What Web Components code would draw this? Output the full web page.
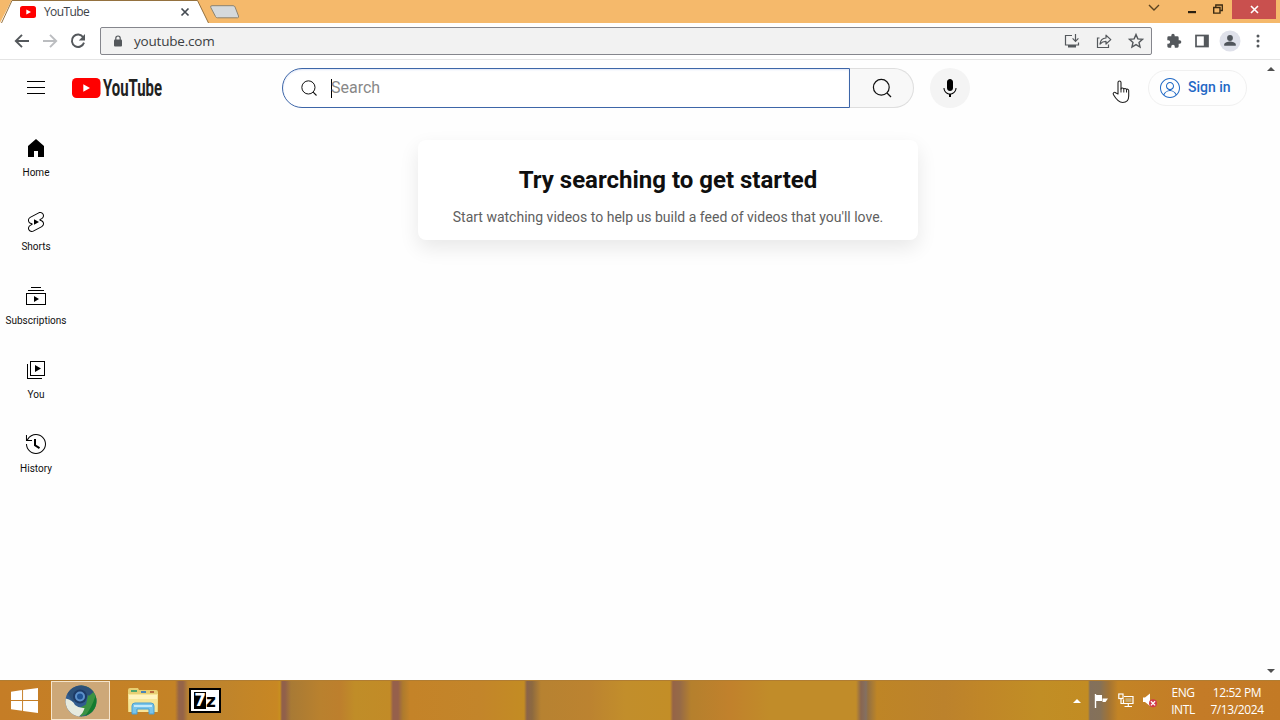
<!DOCTYPE html>
<html lang="en">
<head>
<meta charset="utf-8">
<title>YouTube</title>
<style>
body {
    margin: 0;
    width: 1280px;
    height: 720px;
    overflow: hidden;
    font-family: Roboto, "Liberation Sans", sans-serif;
    background: #fff;
}
</style>
</head>
<body>
<desk-top>
    <browser-tabs slot="tabs" label="YouTube"></browser-tabs>
    <browser-toolbar slot="toolbar" url="youtube.com"></browser-toolbar>
    <yt-masthead slot="head"></yt-masthead>
    <yt-guide slot="guide">
        <yt-guide-item icon="home">Home</yt-guide-item>
        <yt-guide-item icon="shorts">Shorts</yt-guide-item>
        <yt-guide-item icon="subs">Subscriptions</yt-guide-item>
        <yt-guide-item icon="you">You</yt-guide-item>
        <yt-guide-item icon="history">History</yt-guide-item>
    </yt-guide>
    <yt-nudge slot="content">
        <span slot="title">Try searching to get started</span>
        <span slot="text">Start watching videos to help us build a feed of videos that you'll love.</span>
    </yt-nudge>
    <task-bar slot="taskbar"></task-bar>
</desk-top>

<script>
// viewBox size and markup for every icon
const icons = {
    favicon: [16, 12, `<rect width="16" height="12" rx="2.5" fill="#f00"/><path d="M6.3 3.4v5.2L11 6z" fill="#fff"/>`],
    close: [10, 10, `<path d="M1.5 1.5l7 7M8.5 1.5l-7 7" stroke="#444b52" stroke-width="1.7"/>`],
    back: [16, 16, `<path d="M15 8H2M8 1.8L1.8 8 8 14.2" fill="none" stroke="currentColor" stroke-width="1.9"/>`],
    forward: [16, 16, `<path d="M1 8h13M8 1.8L14.2 8 8 14.2" fill="none" stroke="currentColor" stroke-width="1.9"/>`],
    reload: [16, 16, `<path d="M13.2 4.2A6.2 6.2 0 1 0 14 9.6" fill="none" stroke="currentColor" stroke-width="1.9"/><path d="M15 1v6.4H8.8z" fill="currentColor"/>`],
    lock: [10, 12, `<rect x="1" y="4.5" width="8" height="7" rx="1" fill="currentColor"/><path d="M2.8 5V3.2a2.2 2.2 0 0 1 4.4 0V5" fill="none" stroke="currentColor" stroke-width="1.2"/>`],
    install: [16, 16, `<path d="M8 2.500H1.500v9.500h13v-2.500M11.500 1v7M8.600 5.400l2.900 2.900 2.900-2.900" fill="none" stroke="currentColor" stroke-width="1.200"/><path d="M4 12h8v2.500H4z" fill="currentColor"/>`],
    share: [16, 16, `<path d="M3.500 5H1.500v9.500h11v-3" fill="none" stroke="currentColor" stroke-width="1.200"/><path d="M4 11c.4-3.800 2.400-5.800 6-6V2.200L14.800 6.600 10 11V8.400C7.400 8.400 5.500 9.300 4 11z" fill="none" stroke="currentColor" stroke-width="1.200" stroke-linejoin="round"/>`],
    star: [16, 16, `<path d="M8 1.600l1.850 4.300 4.650.4-3.500 3.100 1.050 4.600L8 11.600 3.950 14 5 9.400 1.500 6.300l4.650-.4z" fill="none" stroke="currentColor" stroke-width="1.400"/>`],
    puzzle: [24, 24, `<path fill="currentColor" d="M20.500 11H19V7a2 2 0 0 0-2-2h-4V3.500a2.500 2.500 0 0 0-5 0V5H4a2 2 0 0 0-2 2v3.800h1.500a2.700 2.700 0 0 1 0 5.400H2V20a2 2 0 0 0 2 2h3.800v-1.500a2.700 2.700 0 0 1 5.400 0V22H17a2 2 0 0 0 2-2v-4h1.500a2.500 2.500 0 0 0 0-5z"/>`],
    panel: [14, 14, `<rect x="1" y="1.500" width="12" height="11" fill="none" stroke="currentColor" stroke-width="1.700"/><path d="M8.800 1.500H13v11H8.800z" fill="currentColor"/>`],
    profile: [22, 22, `<circle cx="11" cy="11" r="10.500" fill="#dfe1ea"/><circle cx="11" cy="8" r="2.900" fill="#50555b"/><path d="M5.200 15.800v-1.300c0-2 3.800-3 5.800-3s5.800 1 5.800 3v1.300z" fill="#50555b"/>`],
    dots: [4, 16, `<g fill="currentColor"><circle cx="2" cy="3" r="1.500"/><circle cx="2" cy="8" r="1.500"/><circle cx="2" cy="13" r="1.500"/></g>`],
    menu: [24, 24, `<path d="M21 6H3V5h18v1zm0 5H3v1h18v-1zm0 6H3v1h18v-1z"/>`],
    search: [24, 24, `<circle cx="11.300" cy="11.300" r="7.900" fill="none" stroke="#111" stroke-width="1.200"/><path d="M17 17l4 4" stroke="#111" stroke-width="1.300"/>`],
    mic: [24, 24, `<path d="M12 3c-1.660 0-3 1.370-3 3.070v5.860c0 1.700 1.340 3.070 3 3.070s3-1.370 3-3.070V6.070C15 4.370 13.660 3 12 3zm6.500 9h-1c0 3.030-2.470 5.500-5.500 5.500S6.500 15.030 6.500 12h-1c0 3.240 2.390 5.930 5.500 6.410V21h2v-2.590c3.110-.48 5.500-3.170 5.500-6.410z"/>`],
    user: [24, 24, `<path d="M12 2C6.480 2 2 6.480 2 12s4.480 10 10 10 10-4.480 10-10S17.520 2 12 2zM3 12c0-4.960 4.040-9 9-9s9 4.040 9 9c0 2.420-.97 4.620-2.530 6.240-1.030-2.200-3.180-3.720-5.620-4.110C14.690 13.730 16 12.020 16 10c0-2.210-1.790-4-4-4s-4 1.790-4 4c0 2.020 1.310 3.730 3.150 4.130-2.440.39-4.590 1.910-5.620 4.110C3.970 16.620 3 14.420 3 12zm6-2c0-1.650 1.350-3 3-3s3 1.350 3 3-1.350 3-3 3-3-1.350-3-3zm-2.660 8.990C7.040 16.670 9.340 15 12 15s4.960 1.670 5.660 3.990C16.130 20.240 14.150 21 12 21s-4.130-.76-5.660-2.010z" fill="currentColor"/>`],
    home: [24, 24, `<path d="M4 10v11h6v-6h4v6h6V10l-8-7z"/>`],
    shorts: [24, 24, `<path d="M10 14.650v-5.300L15 12zM17.770 10.320c-.77-.32-1.200-.5-1.200-.5L18 9.060c1.840-.96 2.530-3.230 1.560-5.060s-3.240-2.530-5.070-1.560L6 6.940c-1.290.68-2.070 2.040-2 3.490.07 1.420.93 2.670 2.220 3.250.03.010 1.200.5 1.200.5L6 14.930c-1.830.97-2.530 3.240-1.560 5.070.97 1.830 3.240 2.530 5.070 1.560l8.500-4.500c1.290-.68 2.060-2.040 1.990-3.490-.07-1.420-.94-2.680-2.230-3.250zm-.23 5.860l-8.500 4.500c-1.340.71-3.010.2-3.720-1.140-.71-1.340-.2-3.010 1.140-3.720l2.040-1.080v-1.210l-.69-.28-1.110-.46c-.99-.41-1.650-1.350-1.700-2.410-.05-1.060.52-2.060 1.460-2.560l8.500-4.500c1.340-.71 3.010-.2 3.720 1.140.71 1.340.2 3.010-1.140 3.720L15.500 9.260v1.210l1.800.74c.99.41 1.650 1.350 1.700 2.410.05 1.060-.52 2.060-1.460 2.560z"/>`],
    subs: [24, 24, `<path d="M10 18v-6l5 3-5 3zm7-15H7v1h10V3zm3 3H4v1h16V6zm2 3H2v12h20V9zM3 10h18v10H3V10z"/>`],
    you: [24, 24, `<path d="M11 7l6 3.500L11 14V7zm7 13H4V6H3v15h15v-1zm3-2H6V3h15v15zM7 17h13V4H7v13z"/>`],
    history: [24, 24, `<path d="M14.970 16.950L10 13.870V7h2v5.760l4.030 2.490-1.060 1.700zM22 12c0 5.510-4.490 10-10 10S2 17.510 2 12h1c0 4.960 4.040 9 9 9s9-4.040 9-9-4.040-9-9-9C8.810 3 5.920 4.640 4.280 7.380c-.11.18-.22.37-.31.560L3.940 8H8v1H1.960V3h1v4.740c.04-.09.070-.17.110-.25.110-.22.230-.42.350-.63C5.220 3.860 8.510 2 12 2c5.510 0 10 4.490 10 10z"/>`],
    chevron: [12, 8, `<path d="M1 1l5 5 5-5" fill="none" stroke="#5b4320" stroke-width="1.400"/>`],
    minimize: [8, 3, `<path d="M0 0h8v2.200H0z" fill="#2b2010"/>`],
    restore: [10, 10, `<path d="M2.800 3V1h6.500v5.500H7.200" fill="none" stroke="#3a2a12" stroke-width="1.300"/><path d="M.7 3.500h6.300v5.600H.7z" fill="none" stroke="#3a2a12" stroke-width="1.400"/>`],
    xwin: [9, 9, `<path d="M1 1l7 7M8 1L1 8" stroke="#fff" stroke-width="1.600"/>`],
    hand: [18, 24, `<path d="M6 14V2.500a1.500 1.500 0 0 1 3 0V9c0-1.400 2.600-1.400 2.800.3 0-1.300 2.500-1.100 2.700.5.300-1.100 2.200-.8 2.200.7V16c0 4-2 6.500-6 6.500S4.500 20 1.500 14.800C.4 12.800 2.400 11.500 4 13z" fill="#fff" stroke="#222" stroke-width="1.100" stroke-linejoin="round"/><path d="M9 8.500V12.500M11.800 9.300V12.500M14.500 10v2.500" stroke="#222" fill="none"/>`],
    windows: [28, 26, `<g fill="#fff"><path d="M0 4l11.500-1.800v10.300H0zM12.500 2L28 0v12.500H12.500zM0 13.500h11.500v10.200L0 22zM12.500 13.500H28V26l-15.500-2.200z"/></g>`],
    chromium: [32, 32, `<circle cx="16" cy="16" r="15.500" fill="#315c8f"/><path d="M16 .5a15.500 15.500 0 0 1 11 26.400L16 31.500l-4-7 9-5 2-9H11z" fill="#3b9242"/><path d="M2.500 8.400A15.500 15.500 0 0 1 28.500 7l-4 3.500H13L8 17z" fill="#2c5078"/><path d="M.7 13.500Q8 15 10 20q4 3.500 9.500 3-1 5-5.500 8.400A15.500 15.500 0 0 1 .7 13.500z" fill="#e6eadf"/><path d="M20 30.900a15.500 15.500 0 0 0 10.500-20.200C28 19 24 26 20 30.900z" fill="#137b2e"/><circle cx="15" cy="11.500" r="7" fill="#1d3b67"/><circle cx="15" cy="11.500" r="5" fill="#5d91ca"/><circle cx="15" cy="11.500" r="3" fill="#1f5394"/>`],
    folder: [32, 28, `<path d="M1 3q0-2 2-2h8l1 2h17q2 0 2 2v20H1z" fill="#e8cf73"/><path d="M4 3h6v2H4z" fill="#4fa56b"/><path d="M14 4h5v2h-5z" fill="#4c86b6"/><path d="M23 4h4v2h-4z" fill="#b96b3d"/><path d="M1 7h30l-1 18H2z" fill="#f7e597"/><path d="M2 8h28v4H2z" fill="#fff3bd"/><path d="M5 27v-8q0-3 3-3h16q3 0 3 3v8h-5v-5H10v5z" fill="#79c4ea" stroke="#4b9fd1"/><path d="M7 18h18v2H7z" fill="#c5eafa"/>`],
    flag: [14, 14, `<path d="M1.500 0v14" stroke="#fff" stroke-width="1.400"/><path d="M2 1h6v6H2z" fill="#fff"/><path d="M8.500 4.500h5.500l-2.500 3.500h-3z" fill="#fff"/>`],
    network: [16, 15, `<path d="M6 3.500h9v7H5.500V6.500M10.300 10.500v3M6.500 13.500h7.500M3 6v4.500h2.500" fill="none" stroke="#fff" stroke-width="1.200"/><rect x=".8" y="1" width="4.200" height="4.500" fill="none" stroke="#fff" stroke-width="1.200"/><path d="M7.500 5.200h6v3.700h-6z" fill="#c9ac73"/>`],
    volume: [16, 15, `<path d="M1 4.500h2L8 .5v12.500L3 9H1z" fill="#fff"/><circle cx="11" cy="10.300" r="4" fill="#d23b4a"/><path d="M8.900 8.200l4.200 4.200M13.100 8.200l-4.200 4.200" stroke="#fff" stroke-width="1.300"/>`],
    up: [8, 4, `<path d="M0 4l4-4 4 4z" fill="currentColor"/>`],
    down: [8, 4, `<path d="M0 0l4 4 4-4z" fill="currentColor"/>`]
};

class UiIcon extends HTMLElement {
    constructor() {
        super();
        this.attachShadow({ mode: 'open' });
    }

    connectedCallback() {
        const [w, h, body] = icons[this.getAttribute('name')];
        const size = this.getAttribute('size') || w;
        this.shadowRoot.innerHTML = `
            <style>
            :host { display: block; flex: none; }
            svg { display: block; overflow: visible; }
            </style>
            <svg width="${size}" height="${size * h / w}" viewBox="0 0 ${w} ${h}">${body}</svg>
        `;
    }
}

class DeskTop extends HTMLElement {
    constructor() {
        super();
        this.attachShadow({ mode: 'open' });
        this.shadowRoot.innerHTML = `
            <style>
            :host {
                display: grid;
                grid-template-columns: 1280px;
                grid-template-rows: 23px 37px 1fr 40px;
                width: 1280px;
                height: 720px;
                position: relative;
            }
            .page {
                display: grid;
                grid-template-columns: 1fr 16px;
                background: #fefefe;
                min-height: 0;
            }
            .view {
                display: grid;
                grid-template-rows: 56px 1fr;
                grid-template-columns: 72px 1fr;
            }
            slot[name=head] { display: block; grid-column: 1 / 3; }
            .bar {
                display: flex;
                flex-direction: column;
                justify-content: space-between;
                align-items: center;
                padding: 7px 2px 7px 0;
                color: #505050;
            }
            .pointer { position: absolute; left: 1112px; top: 80px; }
            </style>
            <slot name="tabs"></slot>
            <slot name="toolbar"></slot>
            <div class="page">
                <div class="view">
                    <slot name="head"></slot>
                    <slot name="guide"></slot>
                    <slot name="content"></slot>
                </div>
                <div class="bar">
                    <ui-icon name="up"></ui-icon>
                    <ui-icon name="down"></ui-icon>
                </div>
            </div>
            <slot name="taskbar"></slot>
            <ui-icon class="pointer" name="hand"></ui-icon>
        `;
    }
}

class BrowserTabs extends HTMLElement {
    constructor() {
        super();
        this.attachShadow({ mode: 'open' });
    }

    connectedCallback() {
        this.shadowRoot.innerHTML = `
            <style>
            :host {
                display: flex;
                background: #f5b96b;
                height: 23px;
                font: 12px "Open Sans", "Noto Sans", sans-serif;
                color: #3d4248;
            }
            .tab {
                display: grid;
                width: 210px;
            }
            .tab > * { grid-area: 1 / 1; }
            .in {
                display: flex;
                align-items: center;
                padding: 1px 20px 0 20px;
            }
            .in span { flex: 1; margin: -1px 0 0 8px; letter-spacing: -.6px; }
            .new { margin-top: 5px; }
            .win { display: flex; margin-left: auto; }
            .chev { padding: 4px 28px 0 0; }
            .min { padding: 11px 17px 0 0; }
            .res { padding: 4px 9px 0 0; }
            .x {
                display: flex;
                justify-content: center;
                align-items: center;
                width: 44px;
                height: 19px;
                margin-right: 4px;
                background: #c9504e;
            }
            </style>
            <div class="tab">
                <svg width="210" height="23"><path d="M0 23L11.500.5H197.500L208.500 23z" fill="#fff"/><path d="M1.500 23L12 .5H197.500L208.500 23" fill="none" stroke="#94713f"/></svg>
                <div class="in">
                    <ui-icon name="favicon"></ui-icon>
                    <span>${this.getAttribute('label')}</span>
                    <ui-icon name="close"></ui-icon>
                </div>
            </div>
            <svg class="new" width="30" height="14"><path d="M2 .7h21q1.500 0 2 1.200L28.500 11q.5 1.800-1 1.800H7.500q-1.500 0-2-1.300L.8 2.500Q0 .7 2 .7z" fill="#d5d9dc" stroke="#8c8371"/></svg>
            <div class="win">
                <ui-icon class="chev" name="chevron"></ui-icon>
                <ui-icon class="min" name="minimize"></ui-icon>
                <ui-icon class="res" name="restore"></ui-icon>
                <div class="x"><ui-icon name="xwin"></ui-icon></div>
            </div>
        `;
    }
}

class BrowserToolbar extends HTMLElement {
    constructor() {
        super();
        this.attachShadow({ mode: 'open' });
    }

    connectedCallback() {
        this.shadowRoot.innerHTML = `
            <style>
            :host {
                display: flex;
                align-items: center;
                box-sizing: border-box;
                height: 37px;
                padding: 0 20px 0 14px;
                background: #fff;
                border-bottom: 1px solid #e4e4e4;
                color: #54585c;
                font: 13.5px "Open Sans", "Noto Sans", sans-serif;
            }
            .nav { display: flex; gap: 12px; }
            .off { color: #bbbdc0; }
            .url {
                display: flex;
                align-items: center;
                box-sizing: border-box;
                width: 1052px;
                height: 28px;
                margin-left: 14px;
                padding: 0 7px 0 12px;
                border: 1px solid #85868d;
                border-radius: 2px;
                background: #f2f2f2;
            }
            .url span { flex: 1; margin-left: 11px; color: #3c4043; letter-spacing: -.2px; }
            .acts { display: flex; gap: 16px; }
            .tools { display: flex; align-items: center; margin-left: 14px; }
            .tools ui-icon:nth-child(2) { margin-left: 13px; }
            .tools ui-icon:nth-child(3) { margin-left: 10px; }
            .tools ui-icon:nth-child(4) { margin-left: 15px; }
            </style>
            <div class="nav">
                <ui-icon name="back"></ui-icon>
                <ui-icon class="off" name="forward"></ui-icon>
                <ui-icon name="reload"></ui-icon>
            </div>
            <div class="url">
                <ui-icon name="lock"></ui-icon>
                <span>${this.getAttribute('url')}</span>
                <div class="acts">
                    <ui-icon name="install"></ui-icon>
                    <ui-icon name="share"></ui-icon>
                    <ui-icon name="star"></ui-icon>
                </div>
            </div>
            <div class="tools">
                <ui-icon name="puzzle" size="16"></ui-icon>
                <ui-icon name="panel"></ui-icon>
                <ui-icon name="profile"></ui-icon>
                <ui-icon name="dots"></ui-icon>
            </div>
        `;
    }
}

class YtMasthead extends HTMLElement {
    constructor() {
        super();
        this.attachShadow({ mode: 'open' });
        this.shadowRoot.innerHTML = `
            <style>
            :host {
                display: flex;
                align-items: center;
                box-sizing: border-box;
                height: 56px;
                padding: 0 17px 0 24px;
            }
            .logo { margin-left: 24px; overflow: visible; }
            .logo text { font: 700 23px Roboto, sans-serif; fill: #212121; }
            .search { display: flex; margin-left: 110px; }
            .box {
                display: flex;
                align-items: center;
                box-sizing: border-box;
                width: 568px;
                height: 40px;
                padding-left: 16px;
                border: 1px solid #3d66a8;
                border-radius: 40px 0 0 40px;
                box-shadow: inset 0 1px 2px #dfe6f8;
                background: #fff;
                font-size: 16px;
                color: #888;
            }
            .box span { margin: -2px 0 0 -1px; }
            .caret { width: 1px; height: 19px; margin-left: 12px; background: #000; }
            .go {
                display: flex;
                align-items: center;
                justify-content: center;
                box-sizing: border-box;
                width: 64px;
                height: 40px;
                border: 1px solid #dedede;
                border-left: 0;
                border-radius: 0 40px 40px 0;
                background: #f8f8f8;
            }
            .mic {
                display: flex;
                align-items: center;
                justify-content: center;
                width: 40px;
                height: 40px;
                margin-left: 16px;
                border-radius: 50%;
                background: #f4f4f4;
            }
            .sign {
                display: flex;
                align-items: center;
                box-sizing: border-box;
                width: 99px;
                height: 36px;
                margin-left: auto;
                padding: 0 0 0 9px;
                border: 1px solid #f0f0f0;
                border-radius: 18px;
                color: #1f68c5;
                font-size: 14px;
                font-weight: 500;
            }
            .sign span { margin: -2px 0 0 6px; white-space: nowrap; }
            </style>
            <ui-icon name="menu"></ui-icon>
            <svg class="logo" width="100" height="28">
                <rect y="4" width="28.500" height="20" rx="4.500" fill="#f00"/>
                <path d="M11.300 10.300v7.400l6.700-3.700z" fill="#fff"/>
                <text x="31" y="22.200" textLength="59" lengthAdjust="spacingAndGlyphs">YouTube</text>
            </svg>
            <div class="search">
                <div class="box">
                    <ui-icon name="search" size="20"></ui-icon>
                    <div class="caret"></div>
                    <span>Search</span>
                </div>
                <div class="go"><ui-icon name="search"></ui-icon></div>
            </div>
            <div class="mic"><ui-icon name="mic"></ui-icon></div>
            <div class="sign">
                <ui-icon name="user"></ui-icon>
                <span>Sign in</span>
            </div>
        `;
    }
}

class YtGuide extends HTMLElement {
    constructor() {
        super();
        this.attachShadow({ mode: 'open' });
        this.shadowRoot.innerHTML = `
            <style>
            :host {
                display: flex;
                flex-direction: column;
                padding-top: 4px;
            }
            </style>
            <slot></slot>
        `;
    }
}

class YtGuideItem extends HTMLElement {
    constructor() {
        super();
        this.attachShadow({ mode: 'open' });
    }

    connectedCallback() {
        this.shadowRoot.innerHTML = `
            <style>
            :host {
                display: flex;
                flex-direction: column;
                align-items: center;
                box-sizing: border-box;
                height: 74px;
                padding-top: 16px;
                font-size: 10px;
                line-height: 14px;
                color: #0f0f0f;
            }
            span { margin-top: 6px; white-space: nowrap; }
            </style>
            <ui-icon name="${this.getAttribute('icon')}"></ui-icon>
            <span><slot></slot></span>
        `;
    }
}

class YtNudge extends HTMLElement {
    constructor() {
        super();
        this.attachShadow({ mode: 'open' });
        this.shadowRoot.innerHTML = `
            <style>
            :host {
                display: flex;
                justify-content: center;
                align-items: flex-start;
                padding-top: 24px;
            }
            .card {
                display: flex;
                flex-direction: column;
                align-items: center;
                box-sizing: border-box;
                width: 500px;
                height: 100px;
                padding-top: 24px;
                border-radius: 8px;
                background: #fff;
                box-shadow: 0 8px 20px rgba(0, 0, 0, .09);
            }
            h1 {
                margin: 0;
                font-size: 24px;
                line-height: 32px;
                font-weight: 700;
                color: #0f0f0f;
            }
            p {
                margin: 11px 0 0;
                font-size: 14px;
                line-height: 20px;
                color: #606060;
            }
            </style>
            <div class="card">
                <h1><slot name="title"></slot></h1>
                <p><slot name="text"></slot></p>
            </div>
        `;
    }
}

class TaskBar extends HTMLElement {
    constructor() {
        super();
        this.attachShadow({ mode: 'open' });
        this.shadowRoot.innerHTML = `
            <style>
            :host {
                display: flex;
                align-items: center;
                box-sizing: border-box;
                height: 40px;
                border-top: 1px solid #b07d33;
                color: #fff;
                font: 12px "Open Sans", "Noto Sans", sans-serif;
                /* wooden planks seen through the glass */
                background: linear-gradient(90deg,
                    #c57d26 0, #c48326 175px, #956448 179px, #956448 183px, #b98231 188px,
                    #c88723 277px, #c8901f 280px, #91604a 282px, #91604a 285px, #a87a35 291px,
                    #b9812e 320px, #bd7f2d 340px, #c08d28 355px, #c28b27 390px, #96604b 393px, #96604b 398px, #ae7b2d 403px,
                    #c48328 410px, #c3852a 480px, #c38c23 524px, #8a6449 527px, #8c6940 532px, #b78231 541px,
                    #bc8330 590px, #c28e2b 625px, #c38e27 670px, #966447 673px, #966a47 680px, #b5802d 691px,
                    #c1812c 730px, #c18c29 770px, #c18c29 856px, #896650 861px, #847061 866px, #927044 868px, #be8526 877px,
                    #bc822c 945px, #c08628 980px, #c18e25 1040px, #c28c23 1088px, #83705c 1090px, #857158 1100px, #a37434 1109px, #c38425 1118px,
                    #c47b27 1200px, #c37a25 1280px);
            }
            .start { padding: 0 13px 0 11px; }
            .run {
                display: flex;
                align-items: center;
                justify-content: center;
                box-sizing: border-box;
                width: 59px;
                height: 39px;
                border: 1px solid #f5e5cd;
                background: #cda878;
            }
            .folder { margin-left: 17px; }
            .zip {
                display: flex;
                align-items: center;
                justify-content: center;
                box-sizing: border-box;
                width: 32px;
                height: 25px;
                margin-left: 30px;
                border: 2px solid #000;
                background: #fff;
                color: #000;
                font: 700 17px/17px "DejaVu Sans", sans-serif;
            }
            .zip b { width: 12px; height: 17px; background: #000; color: #fff; text-align: center; }
            .zip i { padding-top: 2px; font-style: normal; }
            .tray { display: flex; align-items: center; margin-left: auto; }
            .tray ui-icon:nth-child(2) { margin-left: 13px; }
            .tray ui-icon:nth-child(3) { margin-left: 10px; }
            .tray ui-icon:nth-child(4) { margin-left: 8px; }
            .txt { line-height: 17px; text-align: center; white-space: nowrap; letter-spacing: -.4px; }
            .lang { width: 26px; margin-left: 12px; }
            .clock { width: 54px; margin: 0 16px 0 14px; }
            </style>
            <ui-icon class="start" name="windows" size="27"></ui-icon>
            <div class="run"><ui-icon name="chromium"></ui-icon></div>
            <ui-icon class="folder" name="folder"></ui-icon>
            <div class="zip"><b>7</b><i>z</i></div>
            <div class="tray">
                <ui-icon name="up"></ui-icon>
                <ui-icon name="flag"></ui-icon>
                <ui-icon name="network"></ui-icon>
                <ui-icon name="volume"></ui-icon>
                <div class="txt lang">ENG<br>INTL</div>
                <div class="txt clock">12:52 PM<br>7/13/2024</div>
            </div>
        `;
    }
}

customElements.define('ui-icon', UiIcon);
customElements.define('desk-top', DeskTop);
customElements.define('browser-tabs', BrowserTabs);
customElements.define('browser-toolbar', BrowserToolbar);
customElements.define('yt-masthead', YtMasthead);
customElements.define('yt-guide', YtGuide);
customElements.define('yt-guide-item', YtGuideItem);
customElements.define('yt-nudge', YtNudge);
customElements.define('task-bar', TaskBar);
</script>
</body>
</html>
